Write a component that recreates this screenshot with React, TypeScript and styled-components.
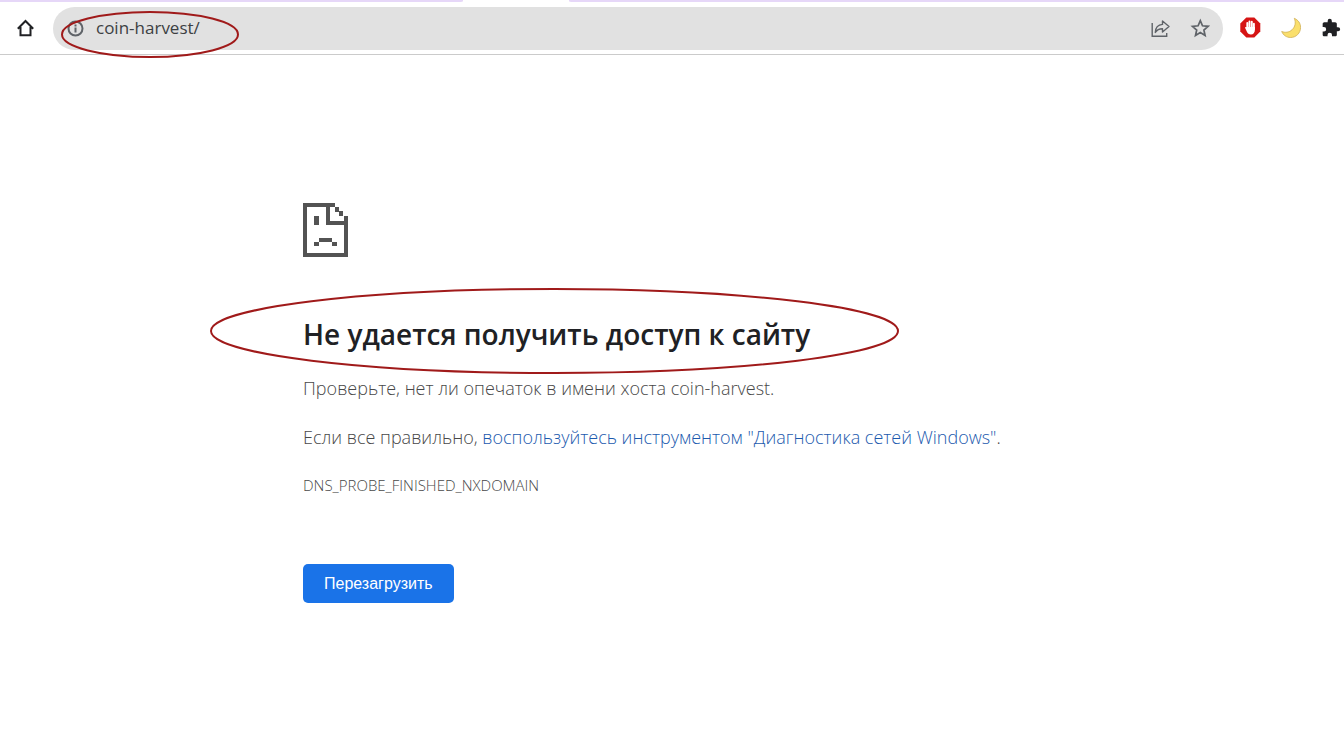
import React from "react";
import styled, { createGlobalStyle } from "styled-components";

const uiFont = `"Segoe UI", "Open Sans", "Noto Sans", sans-serif`;

const GlobalStyle = createGlobalStyle`
  *, *::before, *::after { box-sizing: border-box; }
  body {
    margin: 0;
    background: #fff;
    color: #5f6368;
    font-family: ${uiFont};
    overflow-x: hidden;
  }
`;

const TabStrip = styled.div`
  display: flex;
  height: 2px;
  background: #fff;
`;

const TabStripSegment = styled.div<{ $grow: number; $side: "left" | "right" }>`
  flex: ${(p) => p.$grow} 1 0;
  background: #e6d7f8;
  border-radius: ${(p) => (p.$side === "left" ? "0 0 8px 0" : "0 0 0 8px")} / 2px;
`;

const ActiveTab = styled.div`
  width: 106px;
`;

const Toolbar = styled.header`
  display: flex;
  align-items: center;
  height: 53px;
  padding-left: 16px;
  border-bottom: 1px solid #cbcbcb;
`;

const IconButton = styled.button<{ $size: number }>`
  display: flex;
  flex: none;
  align-items: center;
  justify-content: center;
  width: ${(p) => p.$size}px;
  height: ${(p) => p.$size}px;
  padding: 0;
  border: 0;
  background: none;
  color: #5f6368;
  cursor: pointer;
`;

const Omnibox = styled.div`
  position: relative;
  display: flex;
  flex: 1;
  align-items: center;
  gap: 20px;
  height: 43px;
  margin-left: 17px;
  padding: 0 13px;
  border-radius: 22px;
  background: #e1e1e1;
`;

const Address = styled.input`
  flex: 1;
  min-width: 0;
  margin-left: -10px;
  padding: 0;
  border: 0;
  outline: 0;
  background: none;
  color: #3c3f43;
  font: 400 17px/24px ${uiFont};
`;

const Extensions = styled.div`
  display: flex;
  align-items: center;
  gap: 20px;
  width: 121px;
  padding-left: 16px;
`;

const Page = styled.main`
  max-width: 738px;
  margin: 0 auto;
  padding: 148px 0 40px;
`;

const HeadingWrap = styled.div`
  position: relative;
  margin-top: 58px;
`;

const Heading = styled.h1`
  margin: 0;
  color: #202124;
  font-size: 28px;
  font-weight: 600;
  line-height: 38px;
`;

const Text = styled.p`
  margin: 21px 0 0;
  color: #484848;
  font-size: 18px;
  font-weight: 300;
  line-height: 28px;
`;

const ErrorCode = styled.div`
  margin-top: 24px;
  color: #484848;
  font-size: 15px;
  font-weight: 300;
  line-height: 20px;
`;

const Link = styled.a`
  color: #1c5aae;
  text-decoration: none;
`;

const ReloadButton = styled.button`
  height: 39px;
  margin-top: 69px;
  padding: 0 21px;
  border: 0;
  border-radius: 5px;
  background: #1a73e8;
  color: #fff;
  font: 16px/20px "Liberation Sans", Arial, sans-serif;
  cursor: pointer;
`;

const Ring = styled.svg<{ $left: number; $top: number }>`
  position: absolute;
  left: ${(p) => p.$left}px;
  top: ${(p) => p.$top}px;
  pointer-events: none;
  fill: none;
  stroke: #a01a1a;
  stroke-width: 2;
`;

const HomeIcon = () => (
  <svg width="20" height="20" viewBox="0 0 20 20" fill="none" stroke="#202124" strokeWidth="2">
    <path d="M1.800 10.800 9.500 3l7.700 7.800M4.500 9v8.300h10V9" />
  </svg>
);

const InfoIcon = () => (
  <svg width="20" height="20" viewBox="0 0 20 20" fill="none" stroke="#5f6368" strokeWidth="2">
    <circle cx="9.500" cy="10.500" r="7" />
    <path d="M9.500 9.500v5M9.500 6.500v2" />
  </svg>
);

const ShareIcon = () => (
  <svg width="20" height="20" viewBox="0 0 20 20" fill="none" stroke="#5f6368" strokeWidth="1.400">
    <path d="M2.200 5v13.200h14.500V15" />
    <path d="M5.300 14.500C5.500 9.500 8.200 6.700 12.500 6.400V3l6.500 5.500L12.500 14v-3.300c-3.500 0-5.500 1-7.200 3.800Z" strokeLinejoin="round" />
  </svg>
);

const StarIcon = () => (
  <svg width="20" height="20" viewBox="0 0 20 20" fill="none" stroke="#5f6368" strokeWidth="1.700">
    <path d="m10.300 2.700 2.200 5.100 5.600.5-4.200 3.700 1.200 5.500-4.800-2.900-4.800 2.900L6.700 12 2.500 8.300l5.600-.5Z" />
  </svg>
);

const BlockerIcon = () => (
  <svg width="22" height="22" viewBox="0 0 22 22">
    <path d="M7.300 0.500h8l6 6v8l-6 6h-8l-6-6v-8Z" fill="#d61414" />
    <g stroke="#fff" strokeWidth="1.900" strokeLinecap="round">
      <path d="M8.300 12V6M10.500 11V4.500M12.800 11V4.800M14.900 12V6.700" />
    </g>
    <path d="M7.400 10h8.500v2.700c0 2.700-1.600 4.800-4 4.800-2.100 0-3.200-1-4-2.700l-2-4.200c.7-.8 1.300-.6 1.500-.2Z" fill="#fff" />
  </svg>
);

const MoonIcon = () => (
  <svg width="20" height="22" viewBox="0 0 20 22">
    <path
      d="M13.300 1.300c3.800 1.600 6.300 5 6.300 9 0 5.700-4.400 10.200-10 10.200-4 0-7.300-2.200-8.900-6 3.600 1.400 7.500.9 10.300-1.700 3.200-2.900 4.100-7.200 2.300-11.500Z"
      fill="#fadf6c"
      stroke="#cfae55"
      strokeWidth="0.800"
    />
  </svg>
);

const PuzzleIcon = () => (
  <svg width="20" height="20" viewBox="0 0 24 24" fill="#202124">
    <path d="M20.500 11H19V7c0-1.100-.9-2-2-2h-4V3.500a2.500 2.500 0 0 0-5 0V5H4c-1.100 0-2 .9-2 2v3.800h1.500a2.700 2.700 0 0 1 0 5.400H2V20c0 1.100.9 2 2 2h3.800v-1.500a2.700 2.700 0 0 1 5.400 0V22H17c1.100 0 2-.9 2-2v-4h1.500a2.500 2.500 0 0 0 0-5Z" />
  </svg>
);

const SadPageIcon = () => (
  <svg width="45" height="54" viewBox="0 0 135 162" fill="#535353" shapeRendering="crispEdges" display="block">
    <path d="M0 0h96v12h12v12h12v15h15v123H0ZM12 12v138h111V66H69V12ZM81 12v42h42V39h-15V27H96V12Z" fillRule="evenodd" />
    <path d="M33 39h14v27H33ZM48 105h39v13H48ZM33 118h15v12H33ZM87 118h15v12H87Z" />
  </svg>
);

export default function App() {
  return (
    <>
      <GlobalStyle />
      <TabStrip>
        <TabStripSegment $grow={463} $side="left" />
        <ActiveTab />
        <TabStripSegment $grow={775} $side="right" />
      </TabStrip>
      <Toolbar>
        <IconButton $size={20} aria-label="Главная страница">
          <HomeIcon />
        </IconButton>
        <Omnibox>
          <IconButton $size={20} aria-label="Сведения о сайте">
            <InfoIcon />
          </IconButton>
          <Address aria-label="Адресная строка" defaultValue="coin-harvest/" spellCheck={false} />
          <IconButton $size={20} aria-label="Поделиться">
            <ShareIcon />
          </IconButton>
          <IconButton $size={20} aria-label="Добавить в закладки">
            <StarIcon />
          </IconButton>
          <Ring $left={8} $top={4} width="178" height="47" viewBox="0 0 178 47">
            <ellipse cx="89" cy="23.500" rx="88" ry="22.500" />
          </Ring>
        </Omnibox>
        <Extensions>
          <IconButton $size={22} aria-label="Блокировщик рекламы">
            <BlockerIcon />
          </IconButton>
          <IconButton $size={20} aria-label="Тёмная тема">
            <MoonIcon />
          </IconButton>
          <IconButton $size={20} aria-label="Расширения">
            <PuzzleIcon />
          </IconButton>
        </Extensions>
      </Toolbar>
      <Page>
        <SadPageIcon />
        <HeadingWrap>
          <Heading>Не удается получить доступ к сайту</Heading>
          <Ring $left={-93} $top={-27} width="689" height="86" viewBox="0 0 689 86">
            <ellipse cx="344.500" cy="43" rx="343.500" ry="42" />
          </Ring>
        </HeadingWrap>
        <Text>Проверьте, нет ли опечаток в имени хоста coin-harvest.</Text>
        <Text>
          Если все правильно, <Link href="#diagnostics">воспользуйтесь инструментом "Диагностика сетей Windows"</Link>.
        </Text>
        <ErrorCode>DNS_PROBE_FINISHED_NXDOMAIN</ErrorCode>
        <ReloadButton>Перезагрузить</ReloadButton>
      </Page>
    </>
  );
}
